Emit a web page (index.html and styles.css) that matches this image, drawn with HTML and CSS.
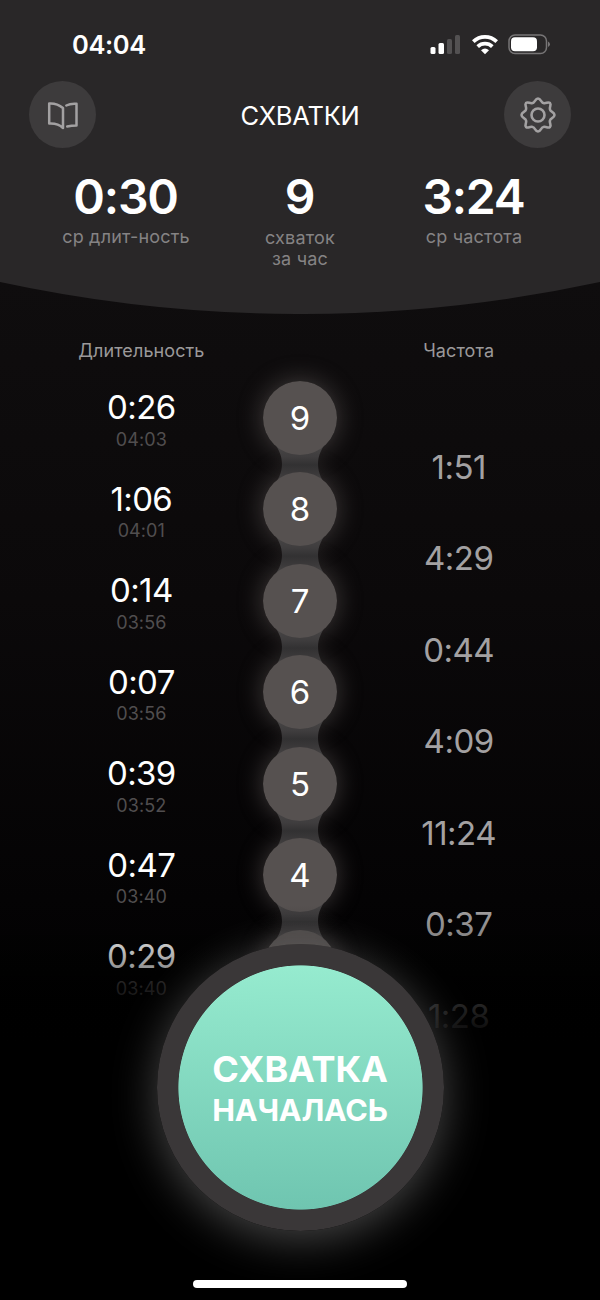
FILE: index.html
```html
<!DOCTYPE html>
<html lang="ru">
<head>
<meta charset="utf-8">
<title>Схватки</title>
<link rel="stylesheet" href="styles.css">
</head>
<body>
<svg width="0" height="0" class="defs" aria-hidden="true">
  <defs>
    <linearGradient id="neck-fill" x1="0" y1="0" x2="0" y2="1">
      <stop offset="0.1" stop-color="#484646"/>
      <stop offset="0.35" stop-color="#3f3d3e"/>
      <stop offset="0.52" stop-color="#323132"/>
      <stop offset="0.7" stop-color="#3b393a"/>
      <stop offset="0.9" stop-color="#484646"/>
    </linearGradient>
    <symbol id="neck" viewBox="0 0 74 50">
      <path fill="url(#neck-fill)" d="M8 1C15.500 8 19 17 19 25C19 33 15.500 42 8 49H66C58.500 42 55 33 55 25C55 17 58.500 8 66 1Z"/>
    </symbol>
  </defs>
</svg>
<div class="screen">
  <header class="header">
    <svg class="header-bg" viewBox="0 0 600 314" aria-hidden="true"><path fill="#292728" d="M0 0H600V282A1422 1422 0 0 1 0 282Z"/></svg>
    <div class="status">
      <span class="clock">04:04</span>
      <div class="indicators">
        <svg width="31" height="20" viewBox="0 0 31 20"><g fill="#fff"><rect x="0.500" y="12" width="5" height="7" rx="1.500"/><rect x="8.500" y="8" width="5.500" height="11" rx="1.500"/></g><g fill="#535152"><rect x="17" y="4" width="5" height="15" rx="1.500"/><rect x="25" y="0" width="5" height="19" rx="1.500"/></g></svg>
        <svg width="26" height="20" viewBox="0 0 26 20"><g fill="none" stroke="#fff" stroke-width="3.700"><path d="M1.300 6.600A16.800 16.800 0 0 1 24.700 6.600"/><path d="M5.700 11.600A10.500 10.500 0 0 1 20.300 11.600"/></g><path fill="#fff" d="M13 19.200L9 15.300Q13 11.800 17 15.300Z"/></svg>
        <svg width="43" height="21" viewBox="0 0 43 21"><rect x="1" y="1" width="37.500" height="18.500" rx="6" fill="none" stroke="#777576" stroke-width="1.500"/><rect x="3" y="3.200" width="26" height="14" rx="4" fill="#fff"/><path d="M40 7.500Q42 8.500 42 10.300Q42 12 40 13Z" fill="#777576"/></svg>
      </div>
    </div>
    <nav class="nav">
      <button class="round" aria-label="Справка"><svg width="34" height="34" viewBox="0 0 34 34" fill="none" stroke="#a3a1a2" stroke-width="2.500" stroke-linecap="round" stroke-linejoin="round"><path d="M17 30V10Q11 5 3.200 5.500V25.500Q12 25 17 30"/><path d="M20.300 7.500Q24.500 5.300 30.500 5.800V27.500Q25.500 27.500 21.200 28.500"/></svg></button>
      <h1 class="title">СХВАТКИ</h1>
      <button class="round" aria-label="Настройки"><svg width="38" height="38" viewBox="0 0 38 38" fill="none" stroke="#a3a1a2" stroke-width="2.600" stroke-linejoin="round"><circle cx="19" cy="19" r="6.500"/><path d="M19 2.500C22 2.500 22 7 24.500 7C27 8 29 5.200 31 7C32.800 9 30 11 31 13.500C31 16 35.500 16 35.500 19C35.500 22 31 22 31 24.500C30 27 32.800 29 31 31C29 32.800 27 30 24.500 31C22 31 22 35.500 19 35.500C16 35.500 16 31 13.500 31C11 30 9 32.800 7 31C5.200 29 8 27 7 24.500C7 22 2.500 22 2.500 19C2.500 16 7 16 7 13.500C8 11 5.200 9 7 7C9 5.200 11 8 13.500 7C16 7 16 2.500 19 2.500Z"/></svg></button>
    </nav>
    <div class="stats">
      <div class="stat"><strong class="stat-value">0:30</strong><span class="stat-label">ср длит-ность</span></div>
      <div class="stat"><strong class="stat-value">9</strong><span class="stat-label stat-label-center">схваток<br>за час</span></div>
      <div class="stat"><strong class="stat-value">3:24</strong><span class="stat-label">ср частота</span></div>
    </div>
  </header>
  <main class="log">
    <div class="columns"><span>Длительность</span><span></span><span class="column-frequency">Частота</span></div>
    <div class="row"><div class="duration"><b>0:26</b><small>04:03</small></div><div class="bead"><span>9</span><svg class="neck"><use href="#neck"/></svg></div><div class="frequency">1:51</div></div>
    <div class="row"><div class="duration"><b>1:06</b><small>04:01</small></div><div class="bead"><span>8</span><svg class="neck"><use href="#neck"/></svg></div><div class="frequency">4:29</div></div>
    <div class="row"><div class="duration"><b>0:14</b><small>03:56</small></div><div class="bead"><span>7</span><svg class="neck"><use href="#neck"/></svg></div><div class="frequency">0:44</div></div>
    <div class="row"><div class="duration"><b>0:07</b><small>03:56</small></div><div class="bead"><span>6</span><svg class="neck"><use href="#neck"/></svg></div><div class="frequency">4:09</div></div>
    <div class="row"><div class="duration"><b>0:39</b><small>03:52</small></div><div class="bead"><span>5</span><svg class="neck"><use href="#neck"/></svg></div><div class="frequency">11:24</div></div>
    <div class="row"><div class="duration"><b>0:47</b><small>03:40</small></div><div class="bead"><span>4</span><svg class="neck"><use href="#neck"/></svg></div><div class="frequency">0:37</div></div>
    <div class="row"><div class="duration"><b>0:29</b><small>03:40</small></div><div class="bead"><span></span></div><div class="frequency">1:28</div></div>
  </main>
  <div class="fade"></div>
  <button class="start"><span class="start-main">СХВАТКА</span><span class="start-sub">НАЧАЛАСЬ</span></button>
  <div class="home-bar"></div>
</div>
</body>
</html>
```
FILE: styles.css
```css
* { box-sizing: border-box; }
body { margin: 0; background: #000; }
button { border: 0; padding: 0; font: inherit; color: inherit; }
.defs { position: absolute; }

.screen {
  position: relative;
  width: 600px;
  height: 1300px;
  overflow: hidden;
  color: #fff;
  font-family: Inter, "Liberation Sans", sans-serif;
  background: linear-gradient(#0f0d0e 280px, #0b090a 600px, #040304 900px, #000 1045px);
}

.header { position: relative; height: 314px; }
.header-bg { position: absolute; inset: 0; width: 600px; height: 314px; }
.status, .nav, .stats { position: relative; }

.status {
  display: flex;
  justify-content: space-between;
  height: 81px;
  padding: 30px 49px 0 72px;
}
.clock { font-size: 25.500px; font-weight: 600; line-height: 29px; letter-spacing: -0.400px; }
.indicators { display: flex; align-items: center; gap: 10.500px; height: 29px; }

.nav {
  display: flex;
  align-items: center;
  justify-content: space-between;
  height: 67px;
  padding: 0 29px;
}
.round {
  display: grid;
  place-items: center;
  width: 67px;
  height: 67px;
  border-radius: 50%;
  background: #3d3b3c;
}
.title { margin: 2px 0 0; font-size: 25.500px; font-weight: 430; line-height: 30px; letter-spacing: -0.250px; }

.stats {
  display: grid;
  grid-template-columns: repeat(3, 1fr);
  padding: 25px 39px 0;
  text-align: center;
}
.stat { display: flex; flex-direction: column; align-items: center; gap: 5px; }
.stat-value { font-size: 48px; font-weight: 600; line-height: 48px; letter-spacing: -1.200px; margin-right: 1px; }
.stat-label { color: #858384; font-size: 18px; line-height: 21px; letter-spacing: 0.200px; }
.stat-label-center { padding-top: 1px; }

.log { position: relative; z-index: 0; padding: 27px 62px 0; }
.columns, .row { display: grid; grid-template-columns: repeat(3, 1fr); justify-items: center; align-items: start; }
.columns {
  height: 39.500px;
  color: #9b999a;
  font-size: 18px;
  line-height: 20px;
  letter-spacing: 0.100px;
}
.row { height: 91.500px; }
.duration { display: flex; flex-direction: column; align-items: center; gap: 6.500px; padding-top: 10.500px; }
.duration b { font-size: 33px; font-weight: 380; line-height: 32px; letter-spacing: -0.600px; }
.duration small { color: #514e4f; font-size: 18px; line-height: 20px; letter-spacing: 0.100px; }
.frequency { padding-top: 70px; color: #a3a1a2; font-size: 33px; font-weight: 380; line-height: 32px; letter-spacing: -0.500px; }

.bead {
  position: relative;
  display: grid;
  justify-items: center;
  width: 74px;
  font-size: 33px;
}
/* The glow sits below the connecting necks, the discs above them. */
.bead::before {
  content: "";
  position: absolute;
  z-index: -1;
  top: 0;
  left: 0;
  width: 74px;
  height: 74px;
  border-radius: 50%;
  box-shadow: 0 0 26px rgba(150, 140, 138, 0.4);
}
.bead span {
  position: relative;
  z-index: 1;
  display: grid;
  place-items: center;
  width: 74px;
  height: 74px;
  border-radius: 50%;
  background: #565150;
}
.neck { width: 74px; height: 50px; margin-top: -16px; }

.fade {
  position: absolute;
  left: 0;
  right: 0;
  top: 905px;
  height: 395px;
  background: linear-gradient(rgba(0, 0, 0, 0), rgba(0, 0, 0, 0.25) 45px, rgba(0, 0, 0, 0.78) 100px, #000 140px);
  z-index: 2;
}
.start {
  position: absolute;
  z-index: 3;
  left: 156.500px;
  top: 944px;
  display: flex;
  flex-direction: column;
  align-items: center;
  justify-content: center;
  width: 287px;
  height: 287px;
  padding-top: 3px;
  border-radius: 50%;
  background: radial-gradient(circle, transparent 121.700px, #3a3738 122.500px), linear-gradient(#96ebcf 21px, #6fc5b0 266px);
  box-shadow: 0 8px 45px rgba(255, 255, 255, 0.28);
  white-space: nowrap;
}
.start-main { font-size: 36px; font-weight: 670; line-height: 42px; letter-spacing: -0.200px; }
.start-sub { font-size: 30.500px; font-weight: 670; line-height: 40px; letter-spacing: -0.200px; }
.home-bar {
  position: absolute;
  z-index: 3;
  left: 193px;
  top: 1280px;
  width: 214px;
  height: 8px;
  border-radius: 4px;
  background: #fff;
}
```
